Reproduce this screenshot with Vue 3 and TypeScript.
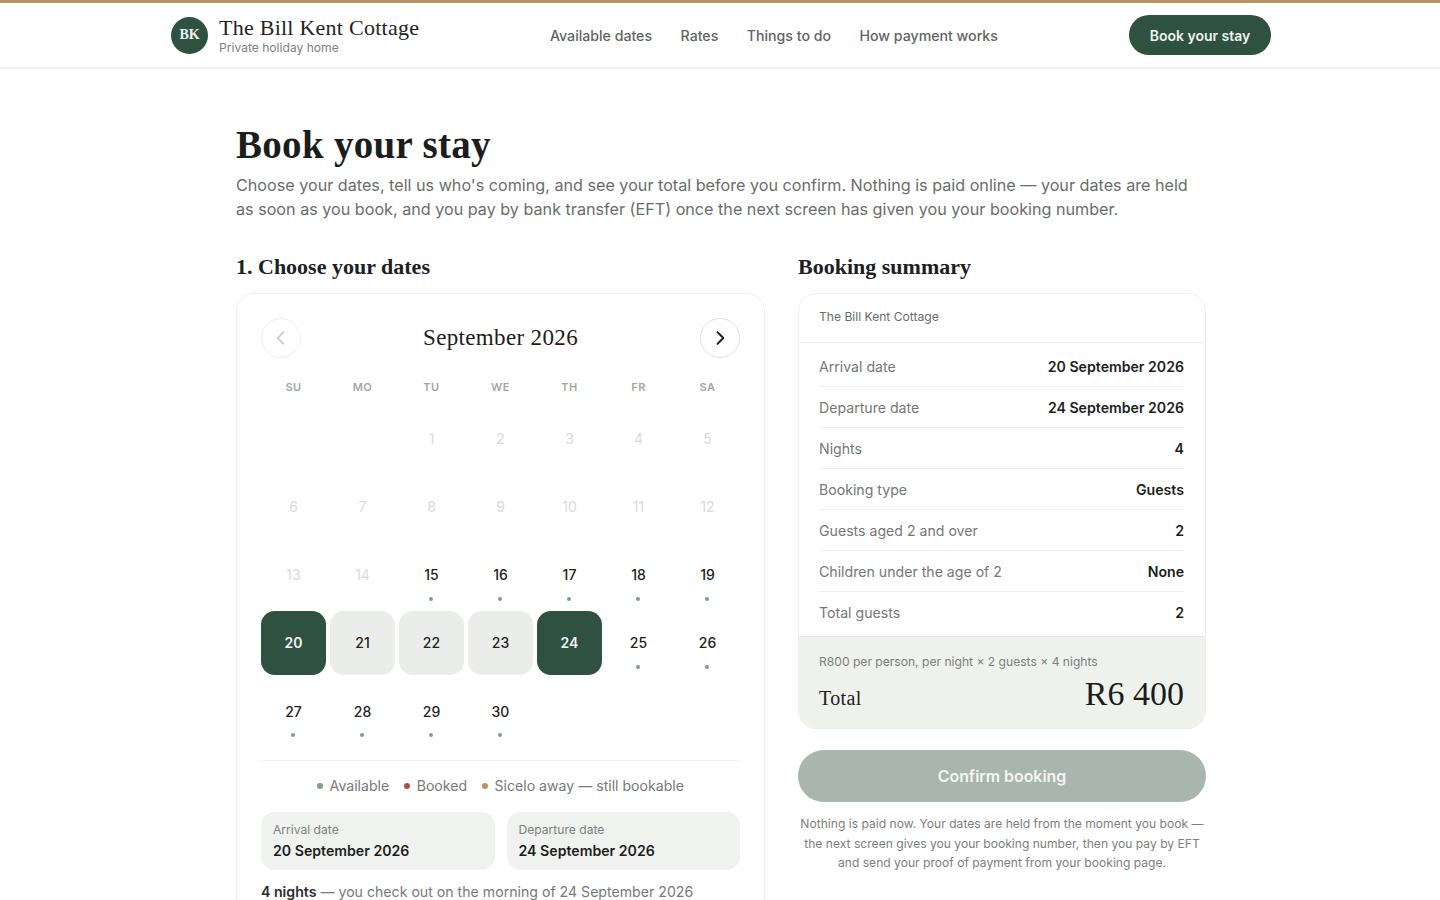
<script setup lang="ts">
interface Day { n: number | null; kind: 'empty' | 'past' | 'open' | 'start' | 'mid' | 'end' }
const nav: string[] = ['Available dates', 'Rates', 'Things to do', 'How payment works']
const week: string[] = ['SU', 'MO', 'TU', 'WE', 'TH', 'FR', 'SA']
const days: Day[] = []
for (let i = 0; i < 2; i++) days.push({ n: null, kind: 'empty' })
for (let d = 1; d <= 30; d++) {
  let kind: Day['kind'] = 'open'
  if (d < 15) kind = 'past'
  else if (d === 20) kind = 'start'
  else if (d === 24) kind = 'end'
  else if (d > 20 && d < 24) kind = 'mid'
  days.push({ n: d, kind })
}
const rows: [string, string][] = [
  ['Arrival date', '20 September 2026'],
  ['Departure date', '24 September 2026'],
  ['Nights', '4'],
  ['Booking type', 'Guests'],
  ['Guests aged 2 and over', '2'],
  ['Children under the age of 2', 'None'],
  ['Total guests', '2'],
]
</script>

<template>
  <div class="page">
    <header class="topbar">
      <div class="topbar-inner">
        <div class="brand">
          <div class="logo">BK</div>
          <div class="brand-text">
            <div class="brand-name">The Bill Kent Cottage</div>
            <div class="brand-sub">Private holiday home</div>
          </div>
        </div>
        <nav class="nav">
          <a v-for="item in nav" :key="item" class="nav-link">{{ item }}</a>
        </nav>
        <button class="cta">Book your stay</button>
      </div>
    </header>

    <main class="main">
      <h1 class="title">Book your stay</h1>
      <p class="lead">Choose your dates, tell us who's coming, and see your total before you confirm. Nothing is paid online — your dates are held as soon as you book, and you pay by bank transfer (EFT) once the next screen has given you your booking number.</p>

      <div class="columns">
        <section class="col-left">
          <h2 class="section-title">1. Choose your dates</h2>
          <div class="card calendar">
            <div class="cal-head">
              <button class="round disabled" aria-label="Previous month">
                <svg width="20" height="20" viewBox="0 0 24 24" fill="none" stroke="currentColor" stroke-width="2" stroke-linecap="round" stroke-linejoin="round"><path d="M15 5l-7 7 7 7" /></svg>
              </button>
              <div class="month">September 2026</div>
              <button class="round" aria-label="Next month">
                <svg width="20" height="20" viewBox="0 0 24 24" fill="none" stroke="currentColor" stroke-width="2.4" stroke-linecap="round" stroke-linejoin="round"><path d="M9 5l7 7-7 7" /></svg>
              </button>
            </div>
            <div class="week">
              <div v-for="w in week" :key="w" class="wd">{{ w }}</div>
            </div>
            <div class="grid">
              <div v-for="(d, i) in days" :key="i" class="day" :class="d.kind">
                <template v-if="d.n">
                  {{ d.n }}
                  <span v-if="d.kind === 'open'" class="dot"></span>
                </template>
              </div>
            </div>
            <div class="legend">
              <span class="leg"><i class="ld green"></i>Available</span>
              <span class="leg"><i class="ld red"></i>Booked</span>
              <span class="leg"><i class="ld gold"></i>Sicelo away — still bookable</span>
            </div>
            <div class="picked">
              <div class="pick">
                <div class="pick-label">Arrival date</div>
                <div class="pick-value">20 September 2026</div>
              </div>
              <div class="pick">
                <div class="pick-label">Departure date</div>
                <div class="pick-value">24 September 2026</div>
              </div>
            </div>
            <p class="nights"><strong>4 nights</strong> — you check out on the morning of 24 September 2026</p>
          </div>
        </section>

        <aside class="col-right">
          <h2 class="section-title summary-title">Booking summary</h2>
          <div class="card summary">
            <div class="sum-head">The Bill Kent Cottage</div>
            <div class="sum-rows">
              <div v-for="r in rows" :key="r[0]" class="sum-row">
                <span class="sum-k">{{ r[0] }}</span>
                <span class="sum-v">{{ r[1] }}</span>
              </div>
            </div>
            <div class="sum-foot">
              <div class="calc">R800 per person, per night × 2 guests × 4 nights</div>
              <div class="total">
                <span class="total-l">Total</span>
                <span class="total-v">R6 400</span>
              </div>
            </div>
          </div>
          <button class="confirm">Confirm booking</button>
          <p class="note">Nothing is paid now. Your dates are held from the moment you book — the next screen gives you your booking number, then you pay by EFT and send your proof of payment from your booking page.</p>
        </aside>
      </div>
    </main>
  </div>
</template>

<style scoped>
.page {
  font-family: Inter, "Liberation Sans", sans-serif;
  color: #1c1e1d;
  background: #fff;
}
.topbar {
  border-top: 3px solid #b8945f;
  border-bottom: 2px solid #f1f1ef;
  height: 69px;
  box-sizing: border-box;
  padding-left: 2px;
}
.topbar-inner {
  width: 1100px;
  height: 100%;
  margin: 0 auto;
  display: flex;
  align-items: center;
}
.brand { display: flex; align-items: center; gap: 11px; width: 379px; }
.logo {
  width: 37px; height: 37px; border-radius: 50%;
  background: #2f5141; color: #eef2ee;
  font-family: "Liberation Serif", serif; font-weight: 700; font-size: 14px;
  display: flex; align-items: center; justify-content: center;
}
.brand-text { padding-top: 2px; }
.brand-name { font-family: "Liberation Serif", serif; font-size: 22px; line-height: 24px; letter-spacing: 0.25px; color: #222423; }
.brand-sub { font-size: 12.1px; line-height: 16px; color: #7d807e; }
.nav { display: flex; gap: 28.5px; flex: 1; }
.nav-link { font-size: 14.15px; font-weight: 500; color: #606462; }
.cta {
  width: 142px; height: 40px; border: 0; border-radius: 20px;
  background: #2f5141; color: #f0f3f0;
  font: 600 14px Inter, sans-serif;
}
.main { width: 970px; margin: 0 auto; padding: 54px 0 0 2px; }
.title {
  margin: 0; font-family: "Liberation Serif", serif; font-weight: 700;
  font-size: 39px; line-height: 44px; letter-spacing: 0.3px; color: #1b1d1c;
}
.lead { margin: 6px 0 0; font-size: 16.17px; line-height: 24px; color: #696d6a; }
.columns { display: flex; gap: 33px; margin-top: 32px; align-items: flex-start; }
.col-left { width: 529px; flex: none; }
.col-right { width: 408px; flex: none; }
.section-title {
  margin: 0 0 12px; font-family: "Liberation Serif", serif; font-weight: 700;
  font-size: 22px; line-height: 28px; color: #1e201f;
}
.card { border: 1.5px solid #eeeeec; border-radius: 18px; box-sizing: border-box; background: #fff; }
.calendar { padding: 24px 24px 0; }
.cal-head { display: flex; align-items: center; justify-content: space-between; }
.round {
  width: 40px; height: 40px; border-radius: 50%; padding: 0;
  border: 1.5px solid #e2e2e0; background: #fff; color: #1c1e1d;
  display: flex; align-items: center; justify-content: center;
}
.round.disabled { border-color: #efefed; color: #c4c6c4; }
.month { font-family: "Liberation Serif", serif; font-size: 23px; letter-spacing: 0.35px; color: #1b1d1c; }
.week { display: grid; grid-template-columns: repeat(7, 65px); gap: 4px; margin-top: 21px; }
.wd { text-align: center; font-size: 11px; font-weight: 600; line-height: 16px; letter-spacing: 0.5px; color: #a4a7a5; }
.grid { display: grid; grid-template-columns: repeat(7, 65px); grid-auto-rows: 64.25px; gap: 4px; margin-top: 11px; }
.day {
  position: relative; display: flex; align-items: center; justify-content: center;
  font-size: 14px; font-weight: 500; color: #1f2120; border-radius: 14px;
}
.day.past { color: #d9dad9; font-weight: 400; }
.day.start, .day.end { background: #2f5141; color: #f2f5f2; font-weight: 600; }
.day.mid { background: #ebedeb; font-weight: 500; }
.dot { position: absolute; left: 50%; bottom: 6px; width: 4px; height: 4px; margin-left: -2.5px; border-radius: 50%; background: #7f9c8f; }
.legend {
  margin-top: 17px; padding-top: 15px; border-top: 1.5px solid #f1f1ef;
  display: flex; justify-content: center; gap: 15px;
  font-size: 14.1px; line-height: 20px; color: #777a78;
}
.leg { display: flex; align-items: center; gap: 6.5px; }
.ld { width: 6px; height: 6px; border-radius: 50%; display: block; }
.ld.green { background: #7f9c8f; }
.ld.red { background: #a8514a; }
.ld.gold { background: #b8945f; }
.picked { display: grid; grid-template-columns: 1fr 1fr; gap: 12px; margin-top: 16px; }
.pick { background: #f0f2ef; border-radius: 14px; padding: 10px 12px; height: 58px; box-sizing: border-box; }
.pick-label { font-size: 12.1px; line-height: 16px; color: #7d807e; }
.pick-value { font-size: 14.15px; font-weight: 600; line-height: 22px; margin-top: 2px; color: #1c1e1d; }
.nights { margin: 12px 0 24px; font-size: 14.13px; line-height: 20px; color: #777a78; }
.nights strong { color: #2a2c2b; font-weight: 600; }
.summary { overflow: hidden; }
.sum-head { height: 49px; padding: 0 20px 3px; box-sizing: border-box; display: flex; align-items: center; font-size: 12.1px; color: #696d6a; border-bottom: 1.5px solid #eeeeec; }
.sum-rows { padding: 3px 21px 3px 20px; }
.sum-row {
  height: 41px; display: flex; align-items: center; justify-content: space-between;
  box-sizing: border-box; border-bottom: 1.5px solid #f1f1ef; font-size: 14.13px;
}
.sum-row:last-child { border-bottom: 0; }
.sum-k { color: #757876; }
.sum-v { font-weight: 600; color: #1c1e1d; }
.sum-foot { background: #eff1ed; border-top: 1.5px solid #e6e8e5; padding: 16px 21px 15px 20px; height: 92px; box-sizing: border-box; }
.calc { font-size: 12.1px; line-height: 18px; color: #7d807e; }
.total { display: flex; justify-content: space-between; align-items: baseline; margin-top: 4px; }
.total-l { font-family: "Liberation Serif", serif; font-size: 20px; letter-spacing: 0.4px; color: #1e201f; }
.total-v { font-family: "Liberation Serif", serif; font-size: 34px; line-height: 38px; color: #1b1d1c; }
.confirm {
  display: block; width: 100%; height: 52px; margin-top: 21px; border: 0; border-radius: 26px;
  background: #a9b5af; color: #f3f5f3; font: 600 15.9px Inter, sans-serif;
}
.note { margin: 12px 0 0; text-align: center; font-size: 12.1px; line-height: 19.5px; color: #7d807e; }
</style>
